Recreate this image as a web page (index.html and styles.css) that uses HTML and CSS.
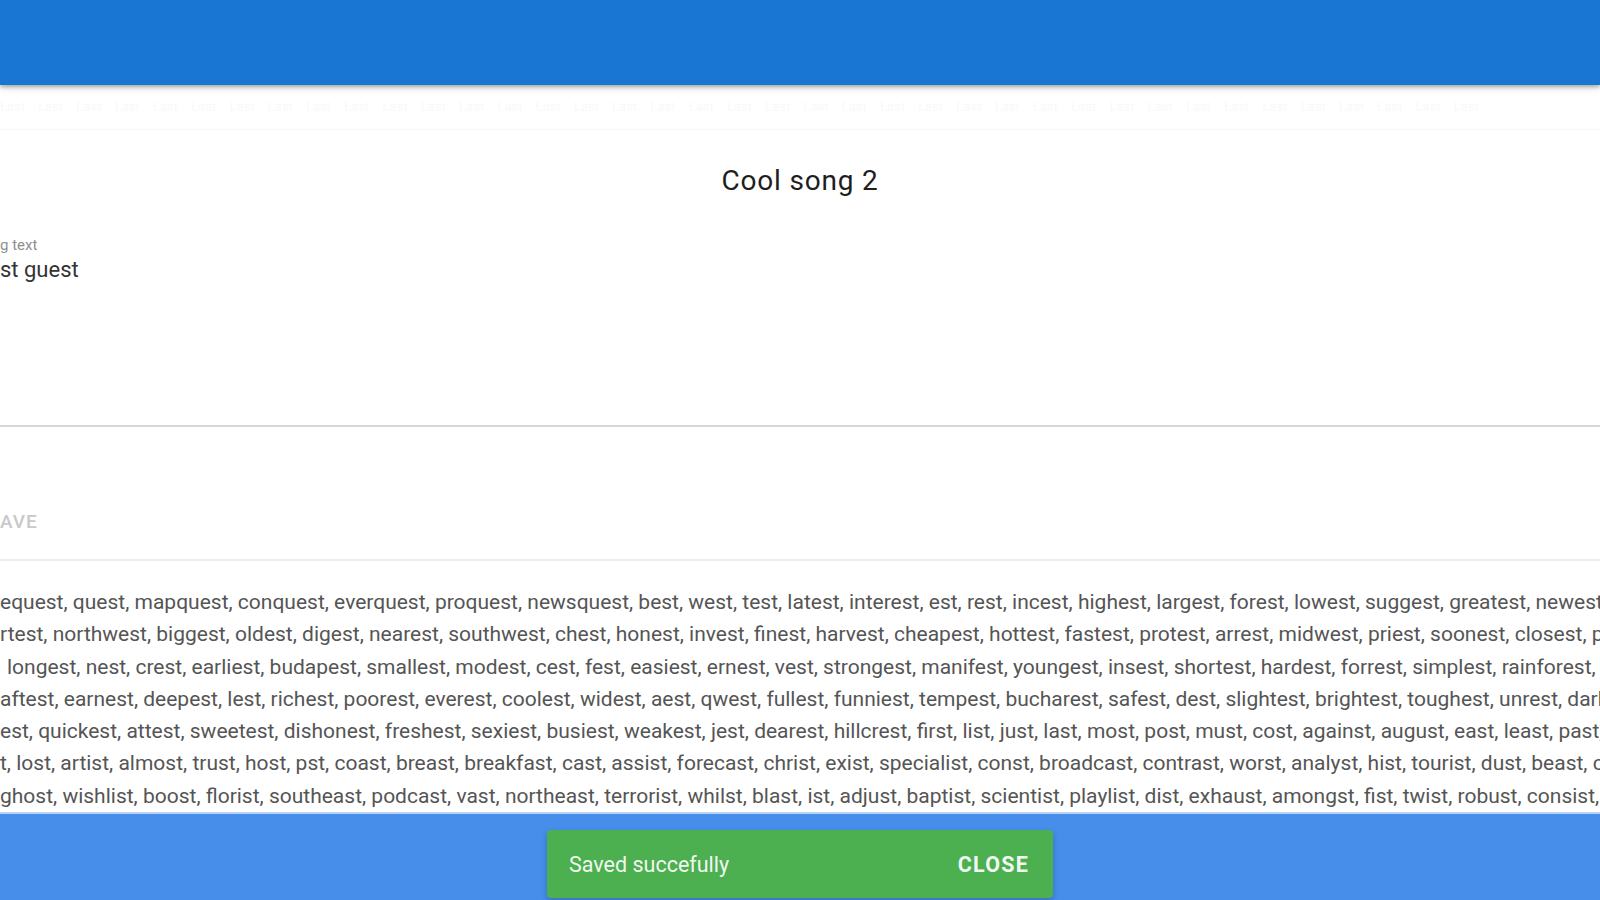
FILE: index.html
```html
<!DOCTYPE html>
<html>
<head>
<meta charset="utf-8">
<link rel="stylesheet" href="styles.css">
</head>
<body>
<div class="page">
  <header class="appbar"></header>
  <div class="ghost">Last Last Last Last Last Last Last Last Last Last Last Last Last Last Last Last Last Last Last Last Last Last Last Last Last Last Last Last Last Last Last Last Last Last Last Last Last Last Last</div>
  <main class="content">
    <h1 class="title">Cool song 2</h1>
    <div class="field">
      <div class="field-label">g text</div>
      <div class="field-value">st guest</div>
    </div>
    <div class="actions">
      <span class="save">AVE</span>
    </div>
    <div class="words">
      <div class="line">equest, quest, mapquest, conquest, everquest, proquest, newsquest, best, west, test, latest, interest, est, rest, incest, highest, largest, forest, lowest, suggest, greatest, newest</div>
      <div class="line">rtest, northwest, biggest, oldest, digest, nearest, southwest, chest, honest, invest, finest, harvest, cheapest, hottest, fastest, protest, arrest, midwest, priest, soonest, closest, purest</div>
      <div class="line indent">longest, nest, crest, earliest, budapest, smallest, modest, cest, fest, easiest, ernest, vest, strongest, manifest, youngest, insest, shortest, hardest, forrest, simplest, rainforest, ugliest</div>
      <div class="line">aftest, earnest, deepest, lest, richest, poorest, everest, coolest, widest, aest, qwest, fullest, funniest, tempest, bucharest, safest, dest, slightest, brightest, toughest, unrest, darkest</div>
      <div class="line">est, quickest, attest, sweetest, dishonest, freshest, sexiest, busiest, weakest, jest, dearest, hillcrest, first, list, just, last, most, post, must, cost, against, august, east, least, past, fast</div>
      <div class="line">t, lost, artist, almost, trust, host, pst, coast, breast, breakfast, cast, assist, forecast, christ, exist, specialist, const, broadcast, contrast, worst, analyst, hist, tourist, dust, beast, chest</div>
      <div class="line">ghost, wishlist, boost, florist, southeast, podcast, vast, northeast, terrorist, whilst, blast, ist, adjust, baptist, scientist, playlist, dist, exhaust, amongst, fist, twist, robust, consist, waist</div>
    </div>
  </main>
  <footer class="bottombar">
    <div class="snackbar">
      <span class="snack-msg">Saved succefully</span>
      <span class="snack-action">CLOSE</span>
    </div>
  </footer>
</div>
</body>
</html>
```
FILE: styles.css
```css
html, body {
  margin: 0;
  padding: 0;
  width: 1600px;
  height: 900px;
  overflow: hidden;
  background: #ffffff;
  font-family: Roboto, "Liberation Sans", sans-serif;
}

.page {
  display: flex;
  flex-direction: column;
  height: 900px;
  overflow: hidden;
}

.appbar {
  flex: 0 0 85px;
  background: #1976d2;
  box-shadow: 0 2px 4px rgba(0, 0, 0, 0.3), 0 4px 8px rgba(0, 0, 0, 0.08);
  position: relative;
  z-index: 2;
}

.ghost {
  flex: 0 0 45px;
  box-sizing: border-box;
  border-bottom: 1px solid #f7f7f7;
  color: #f9f9f9;
  font-size: 13px;
  line-height: 44px;
  white-space: nowrap;
  overflow: hidden;
  word-spacing: 10px;
}

.content {
  flex: 1 1 auto;
  display: flex;
  flex-direction: column;
  overflow: hidden;
}

.title {
  margin: 34px 0 0 0;
  text-align: center;
  font-size: 28px;
  font-weight: 400;
  line-height: 34px;
  color: #1e1e1e;
  letter-spacing: 0.8px;
}

.field {
  margin-top: 39px;
  height: 190px;
  border-bottom: 2px solid #d6d6d6;
  box-sizing: border-box;
}

.field-label {
  font-size: 15px;
  line-height: 16px;
  color: #8f8f8f;
}

.field-value {
  margin-top: 3px;
  font-size: 22px;
  line-height: 28px;
  color: #333333;
}

.actions {
  height: 134px;
  box-sizing: border-box;
  border-bottom: 2px solid #ececec;
  display: flex;
  align-items: center;
  padding-top: 58px;
}

.save {
  font-size: 19px;
  font-weight: 500;
  color: #c9c9c9;
  letter-spacing: 1px;
}

.words {
  padding-top: 25px;
}

.line {
  font-size: 21px;
  line-height: 32.3px;
  color: #555555;
  white-space: nowrap;
  overflow: hidden;
}

.indent {
  padding-left: 7px;
}

.bottombar {
  flex: 0 0 88px;
  background: #478dea;
  border-top: 2px solid #b9d3f6;
  box-sizing: border-box;
  display: flex;
  justify-content: center;
  align-items: flex-end;
  padding-bottom: 2px;
}

.snackbar {
  width: 506px;
  height: 68px;
  box-sizing: border-box;
  background: #4caf50;
  border-radius: 4px;
  box-shadow: 0 3px 6px rgba(0, 0, 0, 0.2);
  display: flex;
  align-items: center;
  justify-content: space-between;
  padding: 0 24px 0 22px;
  color: #f1f8f1;
  font-size: 21.5px;
}

.snack-msg {
  font-weight: 400;
}

.snack-action {
  font-weight: 700;
  letter-spacing: 1.2px;
}
```
